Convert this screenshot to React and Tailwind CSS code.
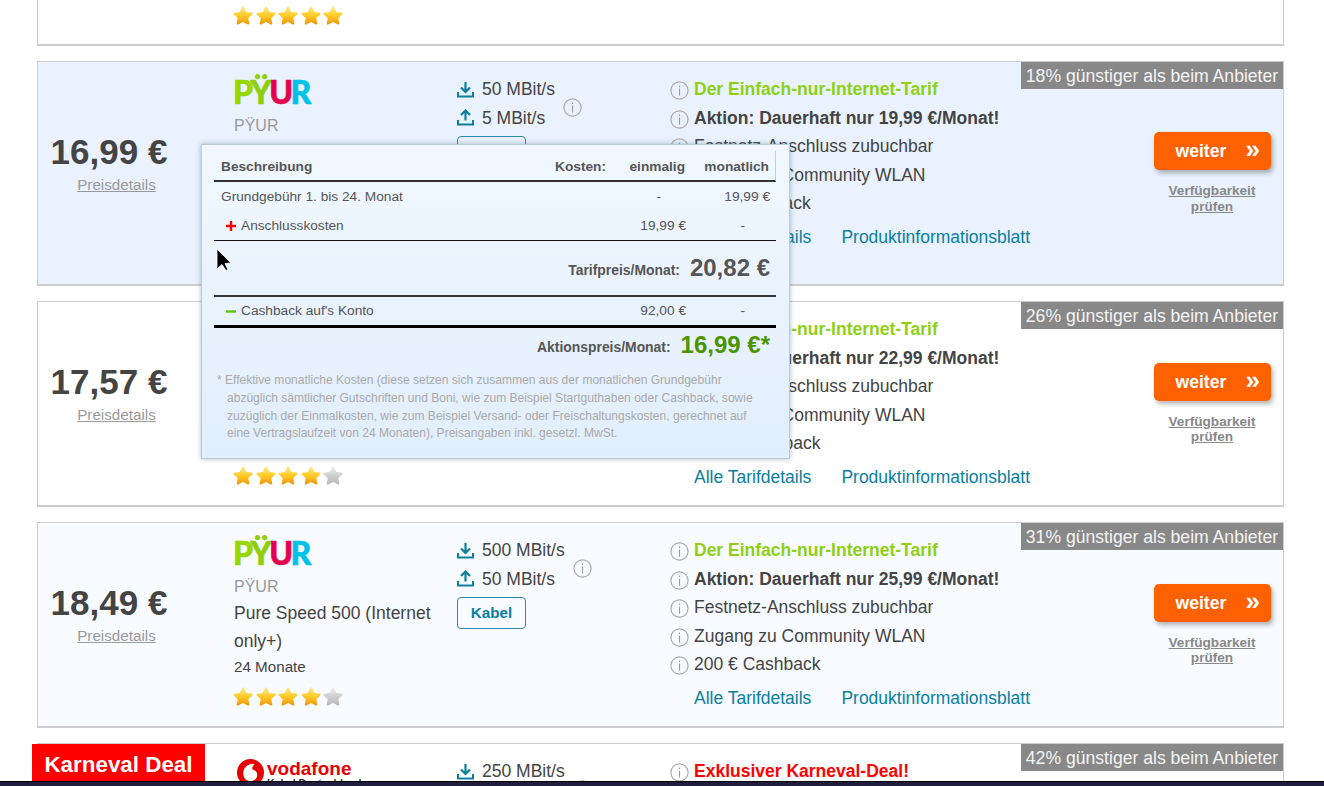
import React from "react";

const Stars = ({ n = 5, id }) => (
  <div className="flex gap-[2.5px]">
    {[0, 1, 2, 3, 4].map((i) => (
      <svg key={i} width="20" height="20" viewBox="0 0 20 20">
        <defs>
          <linearGradient id={`g${id}${i}`} x1="0" y1="0" x2="0" y2="1">
            <stop offset="0" stopColor={i < n ? "#ffec99" : "#eeeeee"} />
            <stop offset="0.5" stopColor={i < n ? "#ffcb26" : "#d0d0d0"} />
            <stop offset="1" stopColor={i < n ? "#f0950c" : "#b8b8b8"} />
          </linearGradient>
        </defs>
        <path
          d="M10 1.2c.5 0 .8.3 1 .8l2.3 4.9 5.3.7c1 .2 1.3 1.1.6 1.8l-3.9 3.7 1 5.3c.1 1-.7 1.5-1.5 1L10 17l-4.8 2.5c-.8.4-1.6-.1-1.5-1l1-5.3L.8 9.5c-.7-.7-.4-1.7.6-1.8l5.3-.8L9 2c.2-.5.5-.8 1-.8z"
          fill={`url(#g${id}${i})`}
        />
      </svg>
    ))}
  </div>
);

const Info = ({ size = 19 }) => (
  <svg width={size} height={size} viewBox="0 0 19 19" className="shrink-0">
    <circle cx="9.5" cy="9.5" r="8.6" fill="none" stroke="#aaaaaa" strokeWidth="1.2" />
    <rect x="9" y="4.5" width="1.1" height="1.6" fill="#999999" />
    <rect x="9" y="7.6" width="1.1" height="7" fill="#999999" />
  </svg>
);

const Down = () => (
  <svg width="17" height="17" viewBox="0 0 17 17" className="shrink-0">
    <path d="M8.5 1v9.5M4 6.5l4.5 4.5L13 6.5" fill="none" stroke="#0b7f9f" strokeWidth="2.2" />
    <path d="M1 11v4.6h15V11" fill="none" stroke="#0b7f9f" strokeWidth="2" />
  </svg>
);

const Up = () => (
  <svg width="17" height="17" viewBox="0 0 17 17" className="shrink-0">
    <path d="M8.5 11.5V2M4 6l4.5-4.5L13 6" fill="none" stroke="#0b7f9f" strokeWidth="2.2" />
    <path d="M1 11v4.6h15V11" fill="none" stroke="#0b7f9f" strokeWidth="2" />
  </svg>
);

const PyurLogo = () => (
  <div className="-ml-[1px] mt-[2px] -mb-[2px] h-[32px] flex items-end text-[32px] leading-[32px] font-black tracking-[-2.5px] [-webkit-text-stroke:0.6px] font-['Lato',sans-serif]">
    <span className="text-[#97d700]">P</span>
    <span className="text-[#8fce0a]">Ÿ</span>
    <span className="text-[#e4004f]">U</span>
    <span className="text-[#00c1e8]">R</span>
  </div>
);

const VodafoneLogo = () => (
  <div className="flex items-start ml-[3px] mt-[3px]">
    <svg width="27" height="27" viewBox="0 0 28 28" className="shrink-0">
      <circle cx="14" cy="14" r="14" fill="#e60000" />
      <path d="M16 5c-5 .5-9.500 4-9.500 10 0 4.500 3 8 7.500 8 4 0 7-3 7-6.500 0-3.500-2.500-5-5-5.500-.5-2.500.5-4.500 2.500-5.500L16 5z" fill="#ffffff" />
    </svg>
    <div className="ml-[3px]">
      <div className="text-[19px] leading-[20px] font-bold text-[#e60000]">vodafone</div>
      <div className="text-[10.500px] leading-[11px] font-bold text-[#333] -mt-[1px]">Kabel Deutschland</div>
    </div>
  </div>
);

const Card = ({ bg, h, price, ribbon, logo, provider, name, months, stars, id, dl, ul, medium = "Kabel", features, deal }) => (
  <div className={`relative flex shrink-0 border border-b-2 border-[#cccccc] ${bg} ${h}`}>
    {deal && (
      <div className="absolute left-[-6px] top-0 w-[173px] h-[44px] bg-[#ff0000] text-white font-bold text-[22.400px] leading-[41px] text-center">
        {deal}
      </div>
    )}
    <div className="absolute right-0 top-0 h-[27px] w-[262px] bg-[#888888] text-[#f4f4f4] text-[17.600px] leading-[28px] text-center">
      {ribbon}
    </div>
    <div className="w-[156px] shrink-0 flex flex-col items-center justify-center pb-[20px]">
      <div className="text-[35px] leading-[40px] font-bold text-[#444444] pr-[14px]">{price}</div>
      <div className="mt-[3px] pl-[1px] text-[15.200px] leading-[20px] text-[#999999] underline">Preisdetails</div>
    </div>
    <div className="w-[223px] shrink-0 ml-[40px] pt-[12px]">
      {logo}
      <div className="mt-[10px] text-[16px] leading-[20px] text-[#999999]">{provider}</div>
      <div className="mt-[2px] text-[17.500px] leading-[28px] text-[#444444]">{name}</div>
      <div className="text-[15.200px] leading-[24px] text-[#444444]">{months}</div>
      <div className="mt-[7px] -ml-[1px]">
        <Stars n={stars} id={id} />
      </div>
    </div>
    <div className="w-[213px] shrink-0 pt-[13px]">
      <div className="flex items-start gap-[8px]">
        <div>
          <div className="flex items-center gap-[8px] h-[28.500px] text-[17.500px] text-[#444444]"><Down />{dl}</div>
          <div className="flex items-center gap-[8px] h-[28.500px] text-[17.500px] text-[#444444]"><Up />{ul}</div>
        </div>
        <div className="mt-[23px]"><Info /></div>
      </div>
      <div className="mt-[4px] w-[69px] h-[32px] border-[1.5px] border-[#2a8aa5] rounded-[4px] text-center text-[15.200px] leading-[29px] font-bold text-[#0b7f9f]">
        {medium}
      </div>
    </div>
    <div className="flex-1 min-w-0 pt-[13px]">
      {features.map((f, i) => (
        <div key={i} className={`flex items-center gap-[5px] h-[28.500px] text-[17.500px] ${f.c || "text-[#444444]"}`}>
          <span className="mt-[3px]"><Info /></span>
          <span>{f.t}</span>
        </div>
      ))}
      <div className="mt-[5px] ml-[24px] flex gap-[30px] text-[17.500px] leading-[28.500px] text-[#0b7f9f]">
        <span>Alle Tarifdetails</span>
        <span>Produktinformationsblatt</span>
      </div>
    </div>
    <div className="w-[140px] shrink-0 mr-[1px] flex flex-col items-center justify-center">
      <div className="relative w-[117px] h-[38px] rounded-[5px] bg-[#ff6000] shadow-[2px_3px_5px_rgba(0,0,0,0.3)] text-white font-bold text-[17.600px] leading-[38px] pl-[22px]">
        weiter
        <span className="absolute left-[92px] top-[-2px] text-[26px]">»</span>
      </div>
      <div className="mt-[13px] text-[13.600px] leading-[15.500px] font-bold text-[#888888] underline text-center">
        Verfügbarkeit<br />prüfen
      </div>
    </div>
  </div>
);

const feats = (top, sale, rest) => [
  { t: top, c: "font-bold text-[#8fd014]" },
  { t: sale, c: "font-bold text-[#444444]" },
  { t: "Festnetz-Anschluss zubuchbar" },
  { t: "Zugang zu Community WLAN" },
  { t: rest },
];

const Row = ({ children, cls = "" }) => (
  <div className={`grid grid-cols-[1fr_79px_84px] items-center pl-[7px] pr-[6px] text-[13.700px] text-[#555555] ${cls}`}>{children}</div>
);

const Popup = () => (
  <div className="absolute left-[201px] top-[144px] w-[589px] h-[315px] bg-gradient-to-b from-[#f1f8ff] to-[#e1eefc] border border-[#bccbdb] shadow-[0_0_5px_rgba(80,110,140,0.45)] pl-[12px] pr-[13px] pt-[6px]">
    <Row cls="h-[31px] pt-[3px] font-bold border-b-2 border-[#333333] border-r border-r-[#cccccc]">
      <div className="flex justify-between"><span>Beschreibung</span><span>Kosten:</span></div>
      <div className="text-right">einmalig</div>
      <div className="text-right">monatlich</div>
    </Row>
    <Row cls="h-[29px] pt-[1px]">
      <div>Grundgebühr 1. bis 24. Monat</div>
      <div className="text-right pr-[25px]">-</div>
      <div className="text-right">19,99 €</div>
    </Row>
    <Row cls="h-[30px] pt-[1px] border-b border-[#111111]">
      <div className="flex items-center gap-[5px] pl-[5px]">
        <svg width="10" height="10" viewBox="0 0 10 10"><path d="M0 5h10M5 0v10" stroke="#ff0000" strokeWidth="2.400" /></svg>
        Anschlusskosten
      </div>
      <div className="text-right">19,99 €</div>
      <div className="text-right pr-[25px]">-</div>
    </Row>
    <div className="h-[56px] flex items-center justify-end pr-[6px] gap-[10px] border-b-2 border-[#333333] text-[#555555]">
      <span className="text-[13.900px] font-bold mt-[5px]">Tarifpreis/Monat:</span>
      <span className="text-[24px] font-bold">20,82 €</span>
    </div>
    <Row cls="h-[28px]">
      <div className="flex items-center gap-[5px] pl-[5px]">
        <svg width="10" height="10" viewBox="0 0 10 10"><path d="M0 5.500h10" stroke="#5fc400" strokeWidth="2.400" /></svg>
        Cashback auf's Konto
      </div>
      <div className="text-right">92,00 €</div>
      <div className="text-right pr-[25px]">-</div>
    </Row>
    <div className="h-[3px] bg-black" />
    <div className="h-[34px] flex items-center justify-end pr-[6px] gap-[10px]">
      <span className="text-[13.900px] font-bold text-[#555555] mt-[5px]">Aktionspreis/Monat:</span>
      <span className="text-[24px] font-bold text-[#4a9400]">16,99 €*</span>
    </div>
    <div className="mt-[10px] pl-[3px] text-[12.050px] leading-[17.800px] text-[#aaaaaa]">
      <div>* Effektive monatliche Kosten (diese setzen sich zusammen aus der monatlichen Grundgebühr</div>
      <div className="pl-[10px]">abzüglich sämtlicher Gutschriften und Boni, wie zum Beispiel Startguthaben oder Cashback, sowie</div>
      <div className="pl-[10px]">zuzüglich der Einmalkosten, wie zum Beispiel Versand- oder Freischaltungskosten, gerechnet auf</div>
      <div className="pl-[10px]">eine Vertragslaufzeit von 24 Monaten), Preisangaben inkl. gesetzl. MwSt.</div>
    </div>
  </div>
);

export default function App() {
  return (
    <div className="relative w-[1324px] h-[786px] overflow-hidden bg-white font-['Liberation_Sans',Arial,sans-serif]">
      <div className="flex flex-col gap-[15px] pl-[37px] pr-[40px]">
        <div className="h-[46px] shrink-0 border-x border-b-2 border-[#cccccc] bg-white pl-[195px] pt-[5px]">
          <Stars n={5} id="a" />
        </div>
        <Card
          id="b" bg="bg-[#e9f2fe]" h="h-[225px]" price="16,99 €" ribbon="18% günstiger als beim Anbieter"
          logo={<PyurLogo />} provider="PŸUR" name="Pure Speed 50 (Internet only+)" months="24 Monate" stars={4}
          dl="50 MBit/s" ul="5 MBit/s"
          features={feats("Der Einfach-nur-Internet-Tarif", "Aktion: Dauerhaft nur 19,99 €/Monat!", "92 € Cashback")}
        />
        <Card
          id="c" bg="bg-white" h="h-[206px]" price="17,57 €" ribbon="26% günstiger als beim Anbieter"
          logo={<PyurLogo />} provider="PŸUR" name="Pure Speed 250 (Internet only+)" months="24 Monate" stars={4}
          dl="250 MBit/s" ul="25 MBit/s"
          features={feats("Der Einfach-nur-Internet-Tarif", "Aktion: Dauerhaft nur 22,99 €/Monat!", "120 € Cashback")}
        />
        <Card
          id="d" bg="bg-[#f8fbff]" h="h-[206px]" price="18,49 €" ribbon="31% günstiger als beim Anbieter"
          logo={<PyurLogo />} provider="PŸUR" name="Pure Speed 500 (Internet only+)" months="24 Monate" stars={4}
          dl="500 MBit/s" ul="50 MBit/s"
          features={feats("Der Einfach-nur-Internet-Tarif", "Aktion: Dauerhaft nur 25,99 €/Monat!", "200 € Cashback")}
        />
        <Card
          id="e" bg="bg-white" h="h-[206px]" price="19,99 €" ribbon="42% günstiger als beim Anbieter" deal="Karneval Deal"
          logo={<VodafoneLogo />} provider="Vodafone" name="Red Internet 250 Cable" months="24 Monate" stars={4}
          dl="250 MBit/s" ul="50 MBit/s"
          features={[
            { t: "Exklusiver Karneval-Deal!", c: "font-bold text-[#ff0000]" },
            { t: "Festnetz-Flat inklusive" },
            { t: "Kostenloser Router" },
            { t: "Kabel-Anschluss" },
            { t: "Cashback" },
          ]}
        />
      </div>
      <Popup />
      <svg width="20" height="28" viewBox="0 0 20 28" className="absolute left-[215px] top-[247px]">
        <path d="M2 2v20l5-4.500 4 6 2-1-3-6 6-.5z" fill="#000000" stroke="#ffffff" strokeWidth="0.800" />
      </svg>
      <div className="absolute left-0 right-0 bottom-0 h-[5px] bg-[#201e3c] border-t border-black" />
    </div>
  );
}
